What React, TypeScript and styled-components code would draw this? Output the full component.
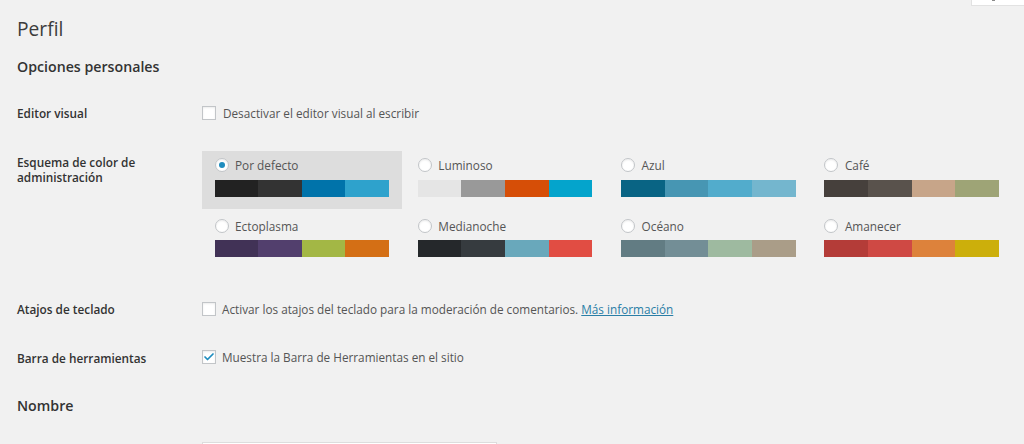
import React from 'react';
import styled, { createGlobalStyle } from 'styled-components';
import { Check } from 'lucide-react';

const GlobalStyle = createGlobalStyle`
	html, body {
		margin: 0;
		padding: 0;
		height: 444px;
		overflow: hidden;
		background: #f1f1f1;
		font-family: "Open Sans", "Noto Sans", sans-serif;
		color: #444;
	}
`;

const Page = styled.div`
	height: 444px;
	overflow: hidden;
	padding-left: 17px;
	position: relative;
`;

const ScreenTab = styled.div`
	position: absolute;
	top: 0;
	right: 0;
	width: 53px;
	height: 6px;
	background: #fff;
	border-left: 1px solid #e2e2e2;
	border-bottom: 1px solid #e2e2e2;
	box-sizing: border-box;
	&::after {
		content: '';
		position: absolute;
		top: 0;
		left: 20px;
		width: 3px;
		height: 1px;
		background: #8a8a8a;
	}
`;

const Title = styled.h1`
	margin: 0;
	padding-top: 16px;
	font-size: 19.2px;
	line-height: 26px;
	font-weight: 400;
	color: #3c3c3c;
`;

const SectionTitle = styled.h2<{ $top: number }>`
	margin: ${(p) => p.$top}px 0 0;
	font-size: 14.2px;
	line-height: 20px;
	font-weight: 600;
	color: #333;
`;

const Row = styled.div<{ $top: number }>`
	display: grid;
	grid-template-columns: 185px 1fr;
	margin-top: ${(p) => p.$top}px;
`;

const Label = styled.div<{ $drop?: number }>`
	margin-top: ${(p) => p.$drop ?? 0}px;
	font-size: 11.8px;
	line-height: 15px;
	font-weight: 600;
	color: #333;
	width: 135px;
`;

const CheckLine = styled.label<{ $gap?: number }>`
	display: flex;
	align-items: center;
	gap: ${(p) => p.$gap ?? 7}px;
	height: 16px;
	margin: -1px 0 1px;
	font-size: 11.75px;
	color: #555;
`;

const Box = styled.span`
	width: 14px;
	height: 14px;
	flex: none;
	box-sizing: border-box;
	background: #fff;
	border: 1px solid #c2c5c8;
	box-shadow: inset 0 1px 2px rgba(0, 0, 0, 0.08);
	display: flex;
	align-items: center;
	justify-content: center;
	color: #1e8cbe;
`;

const MoreLink = styled.a`
	color: #2a7ea6;
	text-decoration: underline;
`;

const SchemeGrid = styled.div`
	display: grid;
	grid-template-columns: repeat(4, 203.3px);
	grid-auto-rows: 58px;
	row-gap: 2.5px;
	margin-top: -4.5px;
`;

const Scheme = styled.div<{ $selected?: boolean }>`
	width: 200px;
	box-sizing: border-box;
	padding: 7.5px 12.5px 0;
	background: ${(p) => (p.$selected ? '#dddddd' : 'transparent')};
`;

const SchemeName = styled.div`
	display: flex;
	align-items: center;
	gap: 6.5px;
	height: 14px;
	font-size: 11.8px;
	line-height: 14px;
	color: #555;
`;

const Radio = styled.span<{ $selected?: boolean }>`
	width: 14px;
	height: 14px;
	box-sizing: border-box;
	border-radius: 50%;
	background: #fff;
	border: 1px solid #c2c5c8;
	box-shadow: inset 0 1px 2px rgba(0, 0, 0, 0.08);
	display: flex;
	align-items: center;
	justify-content: center;
	&::after {
		content: '';
		display: ${(p) => (p.$selected ? 'block' : 'none')};
		width: 6px;
		height: 6px;
		border-radius: 50%;
		background: #1e8cbe;
	}
`;

const Swatches = styled.div`
	display: flex;
	width: 174.5px;
	height: 17px;
	margin-top: 7.5px;
`;

const Swatch = styled.span<{ $color: string }>`
	flex: 1;
	background: ${(p) => p.$color};
`;

const TextInput = styled.div`
	margin: 26px 0 0 185px;
	width: 295px;
	height: 24px;
	box-sizing: border-box;
	background: #fff;
	border: 1px solid #ddd;
`;

const schemes = [
	{ name: 'Por defecto', colors: ['#222222', '#333333', '#0073aa', '#2ea2cc'], selected: true },
	{ name: 'Luminoso', colors: ['#e5e5e5', '#999999', '#d64e07', '#04a4cc'] },
	{ name: 'Azul', colors: ['#096484', '#4796b3', '#52accc', '#74b6ce'] },
	{ name: 'Café', colors: ['#46403c', '#59524c', '#c7a589', '#9ea476'] },
	{ name: 'Ectoplasma', colors: ['#413256', '#523f6d', '#a3b745', '#d46f15'] },
	{ name: 'Medianoche', colors: ['#25282b', '#363b3f', '#69a8bb', '#e14d43'] },
	{ name: 'Océano', colors: ['#627c83', '#738e96', '#9ebaa0', '#aa9d88'] },
	{ name: 'Amanecer', colors: ['#b43c38', '#cf4944', '#dd823b', '#ccaf0b'] },
];

const App: React.FC = () => {
	return (
		<Page>
			<GlobalStyle />
			<ScreenTab />
			<Title>Perfil</Title>
			<SectionTitle $top={15}>Opciones personales</SectionTitle>

			<Row $top={29}>
				<Label>Editor visual</Label>
				<CheckLine>
					<Box />
					Desactivar el editor visual al escribir
				</CheckLine>
			</Row>

			<Row $top={33}>
				<Label>Esquema de color de administración</Label>
				<SchemeGrid>
					{schemes.map((scheme) => (
						<Scheme key={scheme.name} $selected={scheme.selected}>
							<SchemeName>
								<Radio $selected={scheme.selected} />
								{scheme.name}
							</SchemeName>
							<Swatches>
								{scheme.colors.map((color) => (
									<Swatch key={color} $color={color} />
								))}
							</Swatches>
						</Scheme>
					))}
				</SchemeGrid>
			</Row>

			<Row $top={33}>
				<Label>Atajos de teclado</Label>
				<CheckLine $gap={6}>
					<Box />
					<span>
						Activar los atajos del teclado para la moderación de comentarios.{' '}
						<MoreLink href="#">Más información</MoreLink>
					</span>
				</CheckLine>
			</Row>

			<Row $top={32}>
				<Label $drop={1}>Barra de herramientas</Label>
				<CheckLine $gap={6}>
					<Box>
						<Check size={12} strokeWidth={3.5} />
					</Box>
					Muestra la Barra de Herramientas en el sitio
				</CheckLine>
			</Row>

			<SectionTitle $top={30}>Nombre</SectionTitle>
			<TextInput />
		</Page>
	);
};

export default App;
